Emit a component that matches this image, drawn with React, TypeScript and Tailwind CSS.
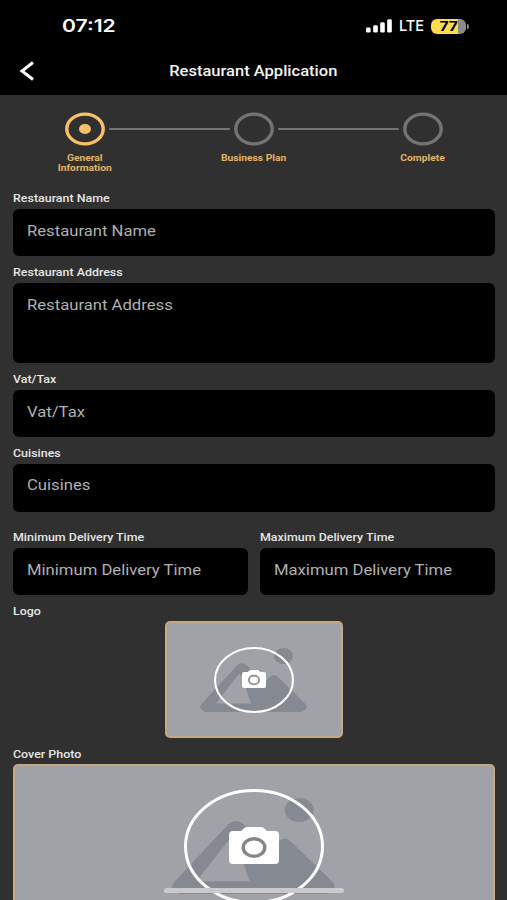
import React from 'react';
import clsx from 'clsx';

const steps = [
  { title: ['General', 'Information'], active: true },
  { title: ['Business Plan'], active: false },
  { title: ['Complete'], active: false },
];

interface FieldProps {
  label: string;
  className?: string;
}

function Label({ children }: { children: React.ReactNode }) {
  return (
    <div className="h-[14px] text-[11px] leading-4 font-medium text-[#e6e6e6] whitespace-nowrap">
      <span className="inline-block origin-left scale-x-[1.13]">{children}</span>
    </div>
  );
}

function Field({ label, className = 'h-[47px] pt-3' }: FieldProps) {
  return (
    <div>
      <Label>{label}</Label>
      <div className={clsx('mt-1 rounded-[6px] bg-black px-[14px] text-[14px] leading-5 text-[#b0b0b0] whitespace-nowrap', className)}>
        <span className="inline-block origin-left scale-x-[1.19]">{label}</span>
      </div>
    </div>
  );
}

function StatusBar() {
  return (
    <div className="flex h-[46px] items-center justify-between pl-[62px] pr-[38px] pt-[6px] text-white">
      <span className="inline-block origin-left scale-x-[1.24] font-[Inter] text-[17px] font-semibold leading-5">07:12</span>
      <div className="flex items-center">
        <svg className="h-[14px] w-[26px]" viewBox="0 0 26 14" fill="currentColor">
          <rect x="0" y="8.6" width="4.6" height="5" rx="1.4" />
          <rect x="7.2" y="6.2" width="4.6" height="7.4" rx="1.4" />
          <rect x="14.2" y="3.3" width="4.6" height="10.3" rx="1.4" />
          <rect x="21.2" y="0.2" width="4.6" height="13.4" rx="1.4" />
        </svg>
        <span className="ml-[7px] w-[26px] font-[Inter] text-[15px] font-medium leading-5">
          <span className="inline-block origin-left scale-x-[0.97]">LTE</span>
        </span>
        <div className="ml-[6px] flex h-[15px] w-[35px] items-center justify-center overflow-hidden rounded-[6px] bg-linear-to-r from-[#fbdc4c] from-77% to-[#8b8b8b] to-77% font-[Inter] text-[13px] font-bold leading-[15px] text-black">
          <span className="inline-block scale-x-[1.2]">77</span>
        </div>
        <span className="ml-[1px] h-[5px] w-[2px] rounded-r-full bg-[#8b8b8b]" />
      </div>
    </div>
  );
}

function Stepper() {
  return (
    <div className="grid h-[96px] shrink-0 grid-cols-3 pt-[17px]">
      {steps.map((step, i) => (
        <div key={step.title[0]} className="relative flex flex-col items-center">
          <svg className="h-[34px] w-10" viewBox="0 0 40 34" fill="none">
            <ellipse cx="20" cy="17" rx="18.2" ry="14.9" strokeWidth="3.4" stroke={step.active ? '#f9c166' : '#747474'} />
            {step.active && <ellipse cx="20" cy="17" rx="6" ry="5" fill="#f9c166" />}
          </svg>
          {i < steps.length - 1 && (
            <span className="absolute left-[109px] top-4 h-[2px] w-[121px] rounded-full bg-[#747474]" />
          )}
          <div className="mt-[7px] text-center text-[9px] font-bold leading-[10px] text-[#e2b465]">
            {step.title.map((line) => (
              <div key={line} className="scale-x-[1.14] whitespace-nowrap">{line}</div>
            ))}
          </div>
        </div>
      ))}
    </div>
  );
}

function Landscape({ className }: { className: string }) {
  return (
    <svg className={clsx('absolute', className)} viewBox="0 0 107 64" preserveAspectRatio="none" fill="#858991">
      <ellipse cx="83.5" cy="8" rx="9.5" ry="8" />
      <path
        fillRule="evenodd"
        d="M37 17.5Q42 13 47 17.5L64 35L70 29Q74 25 78 29L105.500 56Q108 59 106 61L103.500 63Q102 64 101 64H6Q4.500 64 3.500 63L1 61Q-1 59 1.500 56ZM38 27L16 55.500H51L42 29Q40 25 38 27Z"
      />
    </svg>
  );
}

function Camera({ className }: { className: string }) {
  return (
    <svg className={clsx('relative', className)} viewBox="0 0 50 37" preserveAspectRatio="none">
      <path
        fill="#fff"
        d="M4 4H12L15 1.200Q16.200 0 18 0H32Q33.800 0 35 1.200L38 4H46Q50 4 50 8V33Q50 37 46 37H4Q0 37 0 33V8Q0 4 4 4Z"
      />
      <ellipse cx="25" cy="20.500" rx="10.800" ry="8.800" fill="none" stroke="#85868a" strokeWidth="3.400" />
    </svg>
  );
}

function App() {
  return (
    <div className="relative flex h-[900px] w-[507px] flex-col overflow-hidden bg-[#303030] font-[Roboto,sans-serif]">
      <header className="h-[95px] shrink-0 bg-black">
        <StatusBar />
        <div className="grid h-[49px] grid-cols-[40px_1fr_40px] items-center">
          <svg className="ml-[19px] h-5 w-4" viewBox="0 0 16 20" fill="none" stroke="#fff" strokeWidth="3">
            <path d="M14 1.500L3 10L14 18.500" />
          </svg>
          <h1 className="text-center text-[14px] font-medium leading-5 text-[#f2f2f2]">
            <span className="inline-block scale-x-[1.18]">Restaurant Application</span>
          </h1>
        </div>
      </header>

      <Stepper />

      <main className="flex flex-col gap-[9px] pl-[13px] pr-3">
        <Field label="Restaurant Name" />
        <Field label="Restaurant Address" className="h-[80px] pt-3" />
        <Field label="Vat/Tax" />
        <Field label="Cuisines" className="h-[48px] pt-[11px]" />
        <div className="mt-[9px] grid grid-cols-2 gap-3">
          <Field label="Minimum Delivery Time" />
          <Field label="Maximum Delivery Time" />
        </div>

        <section>
          <Label>Logo</Label>
          <div className="relative mx-auto mt-[3px] flex h-[117px] w-[178px] items-center justify-center rounded-[5px] border-2 border-[#c3a880] bg-[#a1a2a8]">
            <Landscape className="left-[33px] top-[25px] h-[64px] w-[107px]" />
            <svg className="absolute h-[66px] w-[80px]" viewBox="0 0 80 66" fill="none" stroke="#fff" strokeWidth="2">
              <ellipse cx="40" cy="33" rx="39" ry="32" />
            </svg>
            <Camera className="mb-[2px] h-[18px] w-6" />
          </div>
        </section>

        <section>
          <Label>Cover Photo</Label>
          <div className="relative mt-[3px] flex h-[165px] items-center justify-center rounded-[5px] border-2 border-[#c3a880] bg-[#a1a2a8]">
            <Landscape className="left-[157px] top-[32px] h-[96px] w-[163px]" />
            <svg className="absolute h-[115px] w-[140px]" viewBox="0 0 140 115" fill="none" stroke="#fff" strokeWidth="3">
              <ellipse cx="70" cy="57.500" rx="68.500" ry="56" />
            </svg>
            <Camera className="mb-[3px] h-[37px] w-[50px]" />
          </div>
        </section>
      </main>

      {/* Home indicator */}
      <div className="absolute bottom-[7px] left-[164px] h-[5px] w-[180px] rounded-full bg-[#c9cacb]" />
    </div>
  );
}

export default App;
